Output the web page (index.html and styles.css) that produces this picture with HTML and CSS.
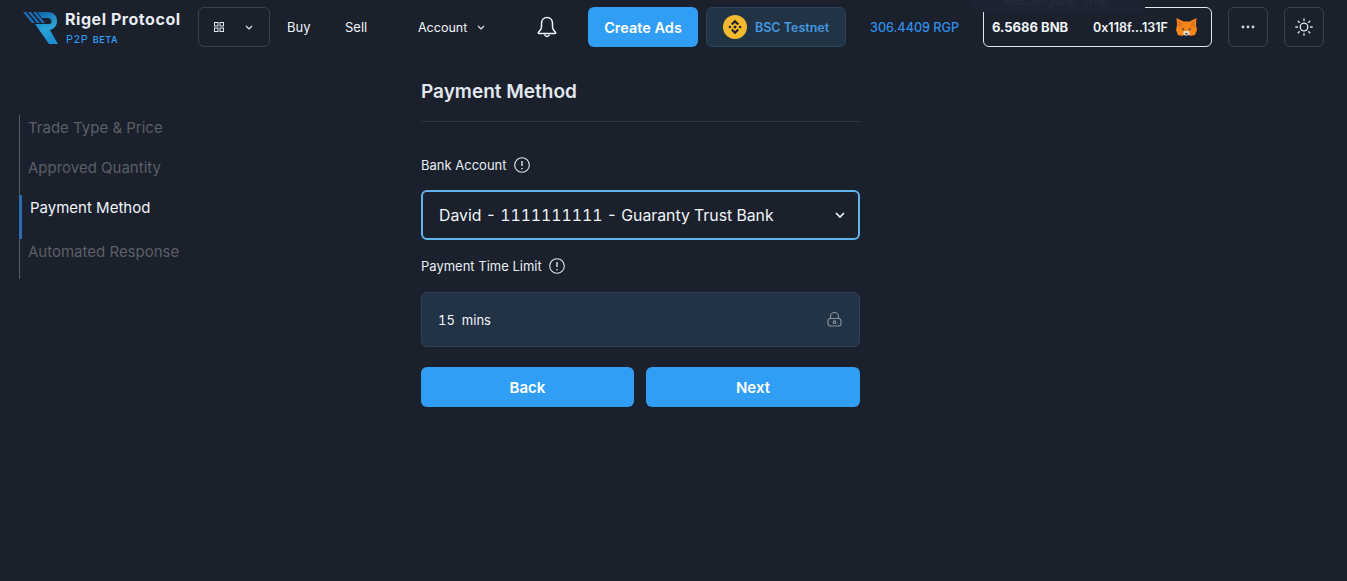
FILE: index.html
```html
<!DOCTYPE html>
<html lang="en">
<head>
  <meta charset="UTF-8" />
  <meta name="viewport" content="width=device-width, initial-scale=1" />
  <title>Rigel Protocol P2P</title>
  <link rel="stylesheet" href="styles.css">
</head>
<body>
  <header class="topbar">
    <a class="brand">
      <svg class="brand-mark" width="37" height="36" viewBox="0 0 37 36">
        <defs>
          <linearGradient id="markGrad" x1="0" y1="0" x2="0.3" y2="1">
            <stop offset="0" stop-color="#0f5fa8" />
            <stop offset="0.6" stop-color="#2aa3d6" />
            <stop offset="1" stop-color="#1c8fd0" />
          </linearGradient>
        </defs>
        <path d="M1 3h3l9 11h-3z M6 3h3l9 11h-3z M11 3h3l9 11h-3z" fill="#1a6fb8" />
        <path d="M15 3h11c6 0 9 4 9 9 0 5-3 8-7 9l8 14h-9L13 15h14c2 0 2.500-1 2.500-2.500S28 9 26 9H20z" fill="url(#markGrad)" />
      </svg>
      <span class="brand-text">
        <span class="brand-name">Rigel Protocol</span>
        <span class="brand-sub">P2P <small>BETA</small></span>
      </span>
    </a>

    <button class="apps-btn">
      <svg width="10" height="10" viewBox="0 0 10 10" fill="none" stroke="#e2e8f0" stroke-width="1">
        <rect x="0.500" y="0.500" width="3.500" height="3.500" />
        <rect x="6" y="0.500" width="3.500" height="3.500" />
        <rect x="0.500" y="6" width="3.500" height="3.500" />
        <rect x="6" y="6" width="3.500" height="3.500" />
      </svg>
      <svg class="chev" width="8" height="5" viewBox="0 0 8 5" fill="none" stroke="#e2e8f0" stroke-width="1.200"><path d="M1 1l3 3 3-3" /></svg>
    </button>

    <nav class="nav">
      <a class="nav-buy">Buy</a>
      <a class="nav-sell">Sell</a>
      <a class="nav-account">Account
        <svg class="chev" width="8" height="5" viewBox="0 0 8 5" fill="none" stroke="#e2e8f0" stroke-width="1.200"><path d="M1 1l3 3 3-3" /></svg>
      </a>
    </nav>

    <svg class="bell" width="20" height="22" viewBox="0 0 20 22" fill="none" stroke="#f1f5f9" stroke-width="1.500">
      <path d="M10 1.500c-3.500 0-5.500 2.700-5.500 6v3.500c0 2-1 3.500-3 5.200-.5.500-.2 1.300.5 1.300h16c.7 0 1-.8.5-1.300-2-1.700-3-3.200-3-5.200V7.500c0-3.300-2-6-5.500-6z" />
      <path d="M7.500 18.500c.5 1.200 1.400 2 2.500 2s2-.8 2.500-2" />
    </svg>

    <button class="btn-primary create-ads">Create Ads</button>

    <button class="network">
      <svg width="24" height="24" viewBox="0 0 24 24">
        <circle cx="12" cy="12" r="12" fill="#f3ba2f" />
        <path d="M12 4.800l4 4-1.500 1.500-2.500-2.500-2.500 2.500L8 8.800z M12 19.200l4-4-1.500-1.500-2.500 2.500-2.500-2.500L8 15.200z M6.900 10.400l1.600 1.600-1.600 1.600L5.300 12z M17.100 10.400l1.600 1.600-1.600 1.600-1.600-1.600z M12 10.200l1.800 1.800-1.800 1.800-1.800-1.800z" fill="#1a202c" />
      </svg>
      BSC Testnet
    </button>

    <span class="rgp">306.4409 RGP</span>

    <div class="wallet">
      <span class="wallet-bal">6.5686 BNB</span>
      <span class="wallet-addr">0x118f...131F</span>
      <svg width="21" height="20" viewBox="0 0 21 20">
        <path d="M.5 1l7 3.500h6l7-3.500-.5 7 1 5-2 5-4.500 1-2-1.500h-4L6.500 19 2 18l-2-5 1-5z" fill="#f6851b" />
        <path d="M2 3l5 3.500-1 4-4-1z M19 3l-5 3.500 1 4 4-1z" fill="#e2761b" />
        <path d="M8 14h5l1 3-2 1.500H9L7 17z" fill="#e4d9c9" />
        <path d="M6 11l2.500 1-1.500 1.500z M15 11l-2.500 1 1.500 1.500z" fill="#233447" />
        <path d="M9.300 16h2.400l-.5 1.500h-1.400z" fill="#3b2c22" />
      </svg>
    </div>

    <button class="icon-btn more">
      <svg width="14" height="4" viewBox="0 0 14 4" fill="#cbd5e0"><circle cx="2" cy="2" r="1.400" /><circle cx="7" cy="2" r="1.400" /><circle cx="12" cy="2" r="1.400" /></svg>
    </button>
    <button class="icon-btn theme">
      <svg width="18" height="18" viewBox="0 0 18 18" fill="none" stroke="#e2e8f0" stroke-width="1.300" stroke-linecap="round">
        <circle cx="9" cy="9" r="3.800" />
        <path d="M9 .8v1.600M9 15.600v1.600M.8 9h1.600M15.600 9h1.600M3.200 3.200l1.100 1.100M13.700 13.700l1.100 1.100M3.200 14.800l1.100-1.100M13.700 4.300l1.100-1.100" />
      </svg>
    </button>
    <div class="top-tooltip">Rectangular Ship</div>
  </header>

  <main class="page">
    <aside class="steps">
      <div class="step">Trade Type &amp; Price</div>
      <div class="step">Approved Quantity</div>
      <div class="step active">Payment Method</div>
      <div class="step">Automated Response</div>
    </aside>

    <section class="form-col">
      <h2 class="form-title">Payment Method</h2>

      <div class="label label-bank">Bank Account
        <svg class="info" width="16" height="16" viewBox="0 0 16 16" fill="none" stroke="#e2e8f0" stroke-width="1.100"><circle cx="8" cy="8" r="7.300" /><path d="M8 4v5M8 11v1.300" stroke-width="1.400" /></svg>
      </div>
      <div class="select-box">
        <span>David - 1111111111 - Guaranty Trust Bank</span>
        <svg width="10" height="6" viewBox="0 0 10 6" fill="none" stroke="#f1f5f9" stroke-width="1.700"><path d="M1 1l4 4 4-4" /></svg>
      </div>

      <div class="label label-time">Payment Time Limit
        <svg class="info" width="16" height="16" viewBox="0 0 16 16" fill="none" stroke="#e2e8f0" stroke-width="1.100"><circle cx="8" cy="8" r="7.300" /><path d="M8 4v5M8 11v1.300" stroke-width="1.400" /></svg>
      </div>
      <div class="locked-box">
        <span>15&nbsp; mins</span>
        <svg width="15" height="15" viewBox="0 0 15 15" fill="none" stroke="#8a94a3" stroke-width="1.100">
          <path d="M3.500 6.500V4.500a4 4 0 0 1 8 0v2" />
          <rect x="1" y="6.500" width="13" height="7.500" rx="2.500" />
          <circle cx="7.500" cy="10.200" r="1.300" />
        </svg>
      </div>

      <div class="form-actions">
        <button class="btn-primary">Back</button>
        <button class="btn-primary">Next</button>
      </div>
    </section>
  </main>
</body>
</html>
```

FILE: styles.css
```css
:root {
  --bg-color: #1a202c;
  --blue: #319ef6;
  --text-color: #f1f5f9;
  --line-color: #2d3441;
  --muted: #5c5f66;
  --box-color: #213345;
}

body {
  font-family: 'Inter', sans-serif;
  background: var(--bg-color);
  color: var(--text-color);
  margin: 0;
  height: 581px;
  overflow: hidden;
}

button {
  font-family: inherit;
  cursor: pointer;
}

.topbar {
  display: flex;
  align-items: center;
  height: 40px;
  padding: 7px 0 0 22px;
  position: relative;
}

.brand {
  display: flex;
  align-items: center;
  width: 176px;
  flex: none;
}

.brand-mark {
  flex: none;
  margin-right: 6px;
}

.brand-text {
  display: flex;
  flex-direction: column;
  padding-top: 2px;
}

.brand-name {
  font-size: 16px;
  font-weight: 700;
  line-height: 20px;
  letter-spacing: 0.55px;
  color: #e8edf3;
  white-space: nowrap;
}

.brand-sub {
  font-size: 11px;
  line-height: 16px;
  margin: 2px 0 0 1px;
  color: #319ef6;
  letter-spacing: 0.5px;
}

.brand-sub small {
  font-size: 9px;
  font-weight: 600;
  margin-left: 1px;
}

.apps-btn {
  width: 72px;
  height: 40px;
  flex: none;
  background: none;
  border: 1px solid #3a404c;
  border-radius: 6px;
  display: flex;
  align-items: center;
  justify-content: space-between;
  padding: 0 16px 0 15px;
}

.nav {
  display: flex;
  align-items: center;
  font-size: 13px;
  color: #f1f5f9;
  flex: none;
}

.nav-buy {
  margin-left: 17px;
  width: 58px;
}

.nav-sell {
  width: 73px;
}

.nav-account {
  width: 119px;
  font-size: 12.500px;
}

.nav-account .chev {
  margin-left: 6px;
  vertical-align: 2px;
}

.bell {
  flex: none;
  width: 20px;
  margin-right: 31px;
}

.btn-primary {
  background: var(--blue);
  color: #fff;
  border: none;
  border-radius: 6px;
  font-size: 15px;
  font-weight: 600;
}

.create-ads {
  width: 110px;
  height: 40px;
  flex: none;
  font-size: 14.500px;
}

.network {
  display: flex;
  align-items: center;
  gap: 8px;
  width: 140px;
  height: 40px;
  flex: none;
  margin-left: 8px;
  padding: 0 0 0 16px;
  background: var(--box-color);
  border: 1px solid #2c4257;
  border-radius: 6px;
  color: #4299e1;
  font-size: 12.500px;
  font-weight: 600;
  white-space: nowrap;
}

.rgp {
  flex: none;
  width: 89px;
  margin-left: 24px;
  color: #2f8fea;
  font-size: 12.600px;
  font-weight: 500;
  white-space: nowrap;
}

.wallet {
  display: flex;
  align-items: center;
  box-sizing: border-box;
  width: 229px;
  height: 40px;
  flex: none;
  margin-left: 24px;
  padding: 0 5px 0 8px;
  border: 1px solid #e2e8f0;
  border-radius: 6px;
  font-size: 12.500px;
  font-weight: 600;
  white-space: nowrap;
}

.wallet-bal {
  width: 101px;
  font-size: 13px;
  font-weight: 700;
}

.wallet-addr {
  width: 83px;
}

.icon-btn {
  width: 40px;
  height: 40px;
  flex: none;
  background: none;
  border: 1px solid #3a404c;
  border-radius: 6px;
  padding: 0;
  display: flex;
  align-items: center;
  justify-content: center;
}

.more {
  margin-left: 16px;
}

.theme {
  margin-left: 16px;
}

.top-tooltip {
  position: absolute;
  left: 972px;
  top: -9px;
  width: 173px;
  height: 21px;
  padding-left: 32px;
  box-sizing: border-box;
  background: #1d2431;
  color: #262d3a;
  font-size: 13px;
  line-height: 18px;
}

.page {
  display: flex;
  padding: 0 0 0 19px;
}

.steps {
  width: 402px;
  flex: none;
  padding-top: 68px;
}

.step {
  box-sizing: border-box;
  width: 200px;
  height: 40px;
  border-left: 1px solid #555a63;
  padding-left: 8px;
  font-size: 15px;
  line-height: 26px;
  color: var(--muted);
}

.step.active {
  height: 44px;
  border-left: 3px solid #2b6cb0;
  color: #f1f5f9;
}

.form-col {
  width: 439px;
  flex: none;
}

.form-title {
  margin: 0;
  padding: 31px 0 15px;
  height: 28px;
  line-height: 28px;
  font-size: 19px;
  font-weight: 600;
  color: #e2e8f0;
  border-bottom: 1px solid var(--line-color);
}

.label {
  display: flex;
  align-items: center;
  gap: 7px;
  font-size: 13px;
  line-height: 16px;
  color: #e8eff5;
}

.label-bank {
  margin-top: 35px;
}

.label-time {
  margin-top: 18px;
}

.select-box {
  box-sizing: border-box;
  display: flex;
  align-items: center;
  justify-content: space-between;
  height: 50px;
  margin-top: 17px;
  padding: 0 13px 0 16px;
  border: 2px solid #63b3ed;
  border-radius: 6px;
  font-size: 15.800px;
  font-variant-numeric: tabular-nums;
}

.locked-box {
  box-sizing: border-box;
  display: flex;
  align-items: center;
  justify-content: space-between;
  height: 55px;
  margin-top: 18px;
  padding: 0 17px 0 16px;
  background: var(--box-color);
  border: 1px solid #2c4257;
  border-radius: 6px;
  font-size: 13px;
  font-variant-numeric: tabular-nums;
}

.form-actions {
  display: grid;
  grid-template-columns: 213px 1fr;
  gap: 12px;
  margin-top: 20px;
}

.form-actions .btn-primary {
  height: 40px;
}
```
